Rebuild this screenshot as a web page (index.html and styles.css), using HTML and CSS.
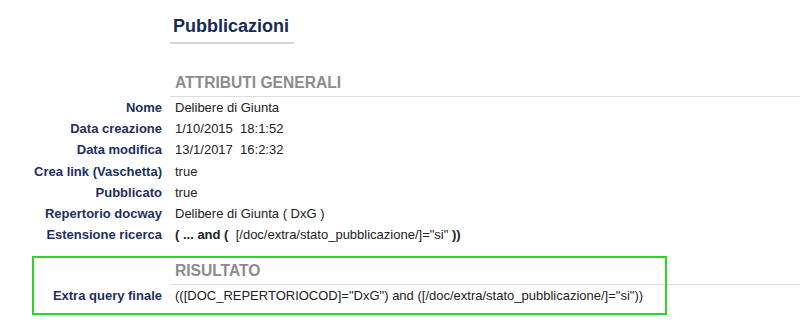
FILE: index.html
```html
<!DOCTYPE html>
<html lang="it">
<head>
  <meta charset="utf-8"/>
  <title>Pubblicazioni</title>
  <link rel="stylesheet" href="styles.css">
</head>
<body>
  <header class="page-head">
    <h1 class="title">Pubblicazioni</h1>
  </header>

  <table class="attrs general">
    <tr>
      <td></td>
      <th class="section-head">ATTRIBUTI GENERALI</th>
    </tr>
    <tr><td class="label">Nome</td><td class="value">Delibere di Giunta</td></tr>
    <tr><td class="label">Data creazione</td><td class="value">1/10/2015&nbsp; 18:1:52</td></tr>
    <tr><td class="label">Data modifica</td><td class="value">13/1/2017&nbsp; 16:2:32</td></tr>
    <tr><td class="label">Crea link (Vaschetta)</td><td class="value">true</td></tr>
    <tr><td class="label">Pubblicato</td><td class="value">true</td></tr>
    <tr><td class="label">Repertorio docway</td><td class="value">Delibere di Giunta ( DxG )</td></tr>
    <tr>
      <td class="label">Estensione ricerca</td>
      <td class="value"><b>( ... and (</b>&nbsp; [/doc/extra/stato_pubblicazione/]="si" <b>))</b></td>
    </tr>
  </table>

  <div class="result">
    <table class="attrs">
      <tr>
        <td></td>
        <th class="section-head">RISULTATO</th>
      </tr>
      <tr>
        <td class="label">Extra query finale</td>
        <td class="value">(([DOC_REPERTORIOCOD]="DxG") and ([/doc/extra/stato_pubblicazione/]="si"))</td>
      </tr>
    </table>
    <div class="highlight"></div>
  </div>
</body>
</html>
```

FILE: styles.css
```css
body {
  margin: 0;
  padding-bottom: 8px;
  font-family: "Liberation Sans", Arial, sans-serif;
  font-size: 13px;
  color: #222;
  background: #fff;
}
.page-head {
  display: flex;
  padding: 15px 0 0 170px;
}
.title {
  margin: 0;
  padding: 0 5px 5px 3px;
  font-size: 18px;
  line-height: 22px;
  color: #172a57;
  border-bottom: 2px solid #d6d6d6;
}
.attrs {
  width: 100%;
  border-collapse: collapse;
}
.attrs td, .attrs th {
  padding: 3px 0;
  line-height: 15.2px;
}
.general {
  margin-top: 30px;
}
.section-head {
  text-align: left;
  padding: 0 0 4px 5px !important;
  font-size: 15.6px;
  line-height: 18px !important;
  color: #8c8c8c;
  border-bottom: 1px solid #ddd;
}
.label {
  width: 162px;
  padding-right: 8px !important;
  text-align: right;
  font-weight: bold;
  color: #1d2f5f;
  white-space: nowrap;
}
.value {
  padding-left: 5px !important;
  white-space: nowrap;
}
.result {
  position: relative;
  margin-top: 11px;
  padding: 6px 0 8px;
}
.highlight {
  position: absolute;
  top: 0;
  bottom: 0;
  left: 32px;
  width: 631px;
  border: 2.5px solid #27d827;
}
```
